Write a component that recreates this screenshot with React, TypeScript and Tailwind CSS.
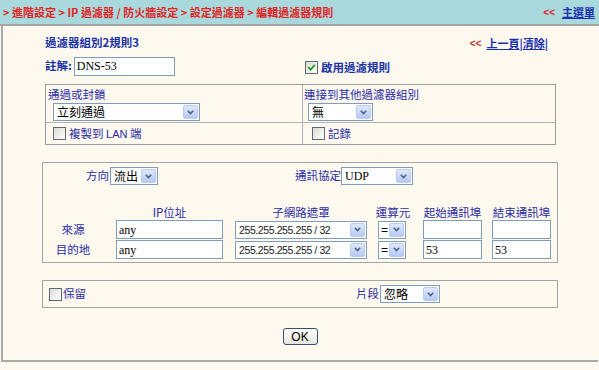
import React from 'react';

const CJK = "font-['Noto_Sans_CJK_TC','Liberation_Sans',sans-serif]";
const SERIF = "font-['Liberation_Serif','Noto_Sans_CJK_TC',serif]";
const SANS = "font-['Liberation_Sans','Noto_Sans_CJK_TC',sans-serif]";

// XP style drop-down (static)
const Sel: React.FC<{ width: string; font?: string; children: React.ReactNode }> = ({ width, font, children }) => (
  <div className={`flex h-[18px] shrink-0 items-center border border-[#7f9db9] bg-white ${width}`}>
    <span className={`flex-1 overflow-hidden whitespace-nowrap pl-[3px] text-[12px] leading-[16px] text-black ${font ?? CJK}`}>
      {children}
    </span>
    <span className="mr-[1px] flex h-[14px] w-[15px] shrink-0 items-center justify-center rounded-[2px] border border-[#b9cbf5] bg-gradient-to-b from-[#dfe8fe] to-[#b6c9f5]">
      <svg width="7" height="5" viewBox="0 0 7 5">
        <path d="M0.8 0.8 L3.5 3.6 L6.2 0.8" fill="none" stroke="#4d6185" strokeWidth="1.6" />
      </svg>
    </span>
  </div>
);

const Box: React.FC<{ width: string; children?: React.ReactNode }> = ({ width, children }) => (
  <div className={`flex h-[19px] shrink-0 items-center border border-[#7f9db9] bg-white pl-[2px] text-[12px] text-black ${SERIF} ${width}`}>
    {children}
  </div>
);

const Check: React.FC<{ checked?: boolean }> = ({ checked }) => (
  <span className="flex h-[13px] w-[13px] shrink-0 items-center justify-center border border-[#5e6a78] bg-gradient-to-br from-[#dcdcd4] to-white">
    {checked && (
      <svg width="9" height="9" viewBox="0 0 9 9">
        <path d="M1.2 4.2 L3.6 6.6 L7.8 1.8" fill="none" stroke="#21a121" strokeWidth="1.8" />
      </svg>
    )}
  </span>
);

const App: React.FC = () => {
  return (
    <div className={`h-[370px] w-[599px] overflow-hidden bg-[#fdf9ef] ${CJK}`}>
      {/* breadcrumb bar */}
      <div className="flex h-[24px] items-center justify-between bg-[#a9d9dc] pl-[3px] pr-[4px]">
        <span className="whitespace-nowrap text-[11px] font-bold text-[#e3231f]">
          &gt; 進階設定 &gt; IP 過濾器 / 防火牆設定 &gt; 設定過濾器 &gt; 編輯過濾器規則
        </span>
        <span className="flex items-center gap-[7px] whitespace-nowrap text-[11px] font-bold">
          <span className={`text-[#e3231f] ${SANS} text-[10px]`}>&lt;&lt;</span>
          <span className="text-[#1a2fb0] underline">主選單</span>
        </span>
      </div>
      <div className="h-[2px] bg-[#a6a6a6]" />

      {/* main panel */}
      <div className="ml-[1px] h-[336px] w-[597px] border-b-2 border-l-2 border-[#a9a9a9] pl-[42px] pt-[10px]">
        <div className="w-[511px]">
          <div className="flex h-[14px] items-center justify-between pr-[8px]">
            <span className="text-[11.5px] font-bold text-[#1b33a6]">過濾器組別2規則3</span>
            <span className="flex items-center text-[11px] font-bold">
              <span className={`mr-[5px] text-[10px] text-[#c0392b] ${SANS}`}>&lt;&lt;</span>
              <span className="text-[#1a2fb0] underline">上一頁</span>
              <span className="text-[#1a2fb0]">|</span>
              <span className="text-[#1a2fb0] underline">清除</span>
              <span className="text-[#1a2fb0]">|</span>
            </span>
          </div>

          <div className="mt-[7px] flex h-[18px] items-center">
            <div className="flex w-[260px] items-center">
              <span className="text-[11.5px] font-bold text-[#1b33a6]">註解:</span>
              <Box width="w-[101px] ml-[2px]">DNS-53</Box>
            </div>
            <div className="flex items-center gap-[3px] pt-[3px]">
              <Check checked />
              <span className="text-[11.5px] font-bold text-[#1b33a6]">啟用過濾規則</span>
            </div>
          </div>

          {/* block / pass */}
          <div className="mt-[9px] grid h-[61px] grid-cols-[257px_1fr] grid-rows-[38px_1fr] border border-[#9c9c9c] text-[11.5px] text-[#2a2ca6]">
            <div className="flex flex-col border-b border-r border-[#b4b4b4] pl-[2px]">
              <span className="mt-[1px] leading-[16px]">通過或封鎖</span>
              <div className="ml-[5px] mt-[1px]">
                <Sel width="w-[147px]">立刻通過</Sel>
              </div>
            </div>
            <div className="flex flex-col border-b border-[#b4b4b4] pl-[1px]">
              <span className="mt-[1px] leading-[16px]">連接到其他過濾器組別</span>
              <div className="ml-[4px] mt-[1px]">
                <Sel width="w-[65px]">無</Sel>
              </div>
            </div>
            <div className="flex items-center gap-[3px] border-r border-[#b4b4b4] pl-[7px]">
              <Check />
              <span>
                複製到 <span className={`${SANS} text-[11px]`}>LAN</span> 端
              </span>
            </div>
            <div className="flex items-center gap-[3px] pl-[9px]">
              <Check />
              <span>記錄</span>
            </div>
          </div>
        </div>

        {/* address block */}
        <div className="-ml-[3px] mt-[17px] h-[101px] w-[516px] border border-[#a4a4a4] pt-[4px] text-[11.5px] text-[#2a2ca6]">
          <div className="flex h-[18px] items-center">
            <span className="w-[67px] pr-[1px] text-right">方向</span>
            <Sel width="w-[48px]">流出</Sel>
            <span className="ml-[135px] w-[48px] text-right">通訊協定</span>
            <Sel width="w-[72px]" font={SERIF}>UDP</Sel>
          </div>
          <div className="mt-[21px] flex h-[14px] items-center leading-none">
            <span className="w-[60px]" />
            <span className="ml-[13px] w-[107px] text-center">IP位址</span>
            <span className="ml-[12px] w-[132px] text-center">子網路遮罩</span>
            <span className="ml-[7px] w-[38px] text-center">運算元</span>
            <span className="ml-[11px] w-[59px] text-center">起始通訊埠</span>
            <span className="ml-[10px] w-[59px] text-center">結束通訊埠</span>
          </div>
          {[
            { label: '來源', port: '' },
            { label: '目的地', port: '53' },
          ].map((row, i) => (
            <div key={row.label} className={`flex h-[19px] items-center ${i === 1 ? 'mt-[1px]' : ''}`}>
              <span className="w-[60px] text-center">{row.label}</span>
              <Box width="ml-[13px] w-[107px]">any</Box>
              <div className="ml-[12px]">
                <Sel width="w-[132px]" font={SANS}>
                  <span className="text-[10.5px] tracking-[-0.4px] text-[#222]">255.255.255.255 / 32</span>
                </Sel>
              </div>
              <div className="ml-[11px]">
                <Sel width="w-[28px]" font={SANS}>
                  <span className="-ml-[1px]">=</span>
                </Sel>
              </div>
              <Box width="ml-[17px] w-[59px]">{row.port}</Box>
              <Box width="ml-[10px] w-[59px]">{row.port}</Box>
            </div>
          ))}
        </div>

        {/* fragment block */}
        <div className="-ml-[3px] mt-[17px] flex h-[28px] w-[516px] items-center border border-[#a4a4a4] pl-[6px] text-[11.5px] text-[#2a2ca6]">
          <Check />
          <span className="ml-[1px]">保留</span>
          <span className="ml-[270px]">片段</span>
          <div className="ml-[1px]">
            <Sel width="w-[60px]">忽略</Sel>
          </div>
        </div>

        <div className="-ml-[3px] mt-[20px] flex w-[516px] justify-center">
          <button className={`flex h-[17px] w-[35px] items-center justify-center rounded-[3px] border border-[#35506f] bg-gradient-to-b from-white to-[#e6e4dc] text-[12px] leading-none text-black ${SANS}`}>
            OK
          </button>
        </div>
      </div>
    </div>
  );
};

export default App;
